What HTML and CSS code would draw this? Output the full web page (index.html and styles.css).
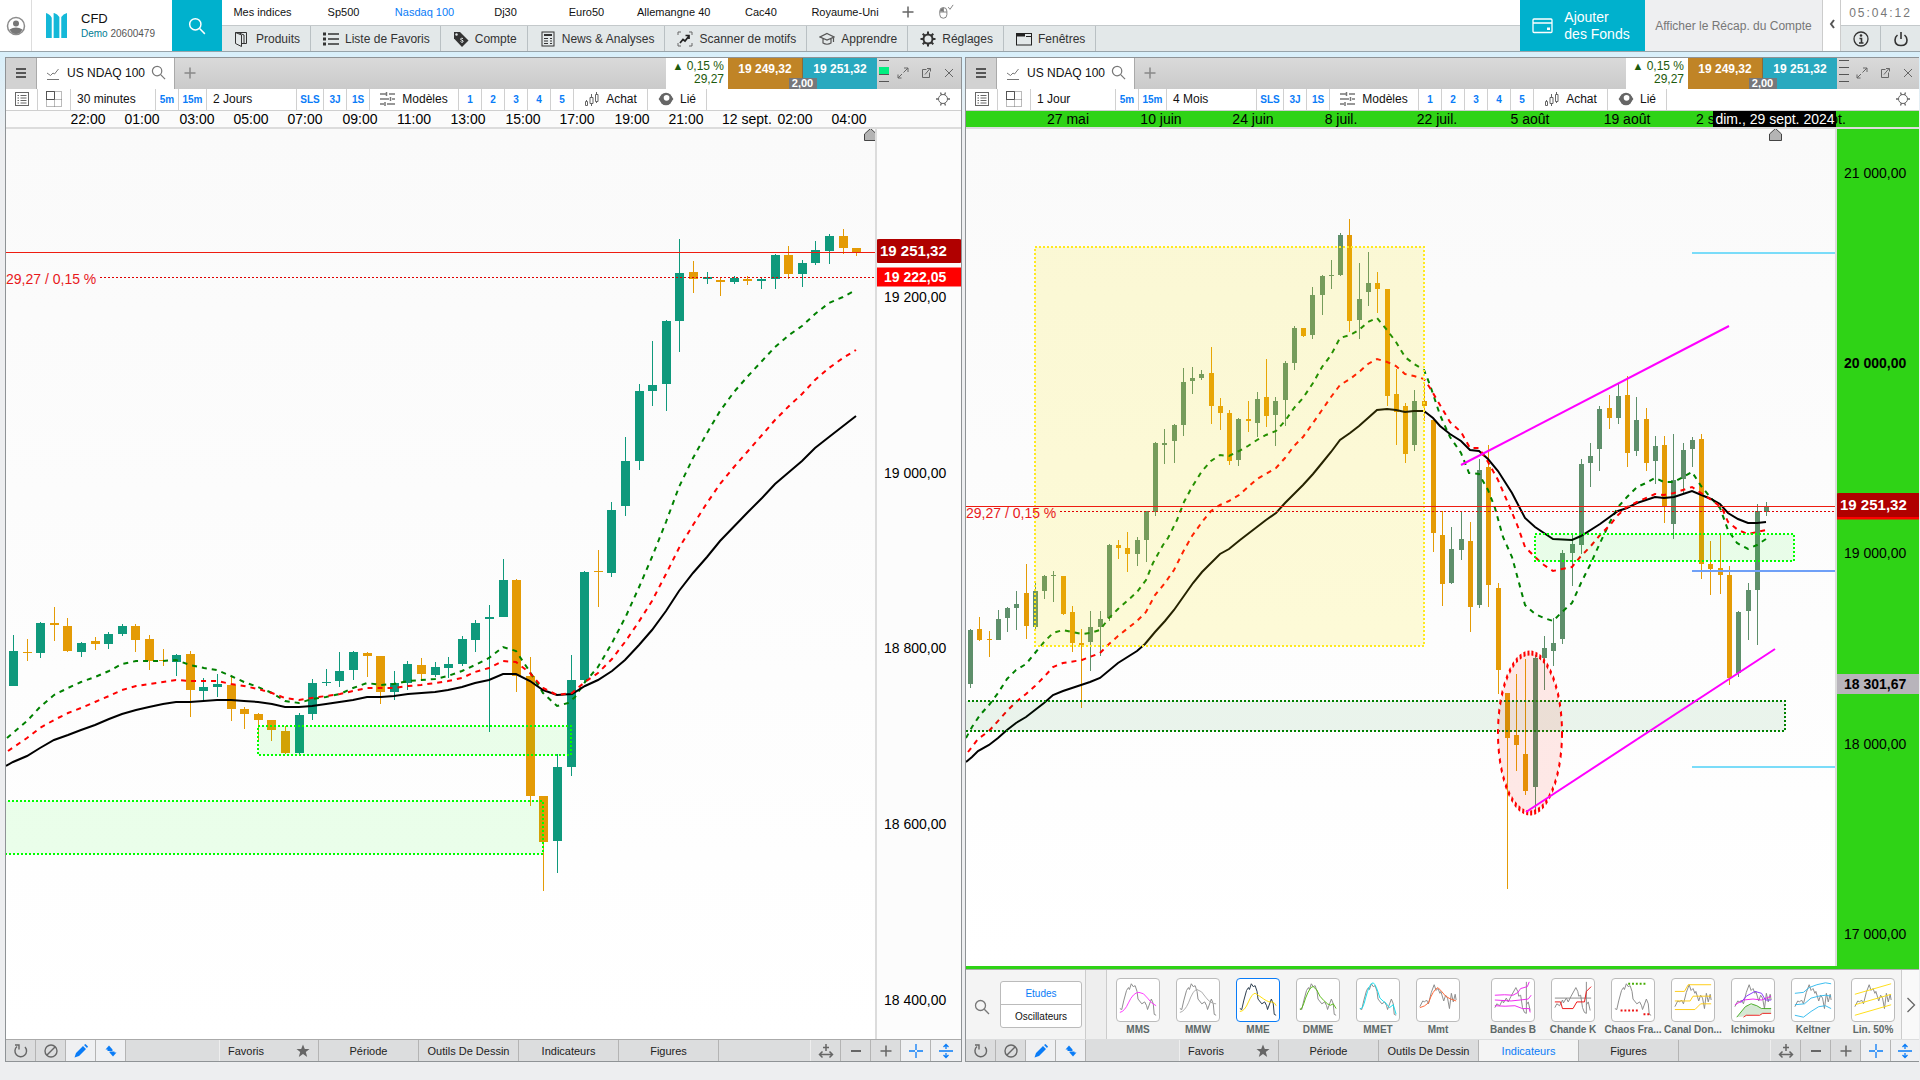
FILE: index.html
```html
<!DOCTYPE html>
<html lang="fr">
<head>
  <meta charset="UTF-8" />
  <meta name="viewport" content="width=device-width, initial-scale=1.0"/>
  <title>CFD - Nasdaq 100</title>
  <link rel="stylesheet" href="styles.css">
</head>
<body>

<!-- icon set -->
<svg class="sprite" width="0" height="0">
  <symbol id="i-user" viewBox="0 0 20 20"><circle cx="10" cy="10" r="8.5" fill="none" stroke="#8c8c8c" stroke-width="1.5"/><circle cx="10" cy="7.5" r="3" fill="#777"/><path d="M3.5 13.5Q10 9.5 16.500 13.500Q14 18 10 18Q6 18 3.500 13.500Z" fill="#777"/></symbol>
  <symbol id="i-search" viewBox="0 0 16 16"><circle cx="6.500" cy="6.500" r="5" fill="none" stroke="currentColor" stroke-width="1.300"/><path d="M10.300 10.300L15 15" stroke="currentColor" stroke-width="1.300"/></symbol>
  <symbol id="i-plus" viewBox="0 0 12 12"><path d="M6 0.500V11.500M0.500 6H11.500" stroke="currentColor" stroke-width="1.500"/></symbol>
  <symbol id="i-mouse" viewBox="0 0 18 18"><rect x="2" y="4" width="8" height="12" rx="4" fill="none" stroke="#777"/><path d="M2 9H10M6 4V9" stroke="#777"/><path d="M2.500 8.500V7Q3 4.500 6 4.500V8.500Z" fill="#777"/><path d="M11.500 3.500L13.500 6L17 1" fill="none" stroke="#777"/></symbol>
  <symbol id="i-book" viewBox="0 0 16 16"><path d="M1.500 1.500H12.500V12.500H8" fill="none" stroke="#333"/><path d="M1.500 1.500L7.500 4V15.500L1.500 12.500ZM4 1.500L10 4V13" fill="none" stroke="#333"/></symbol>
  <symbol id="i-list" viewBox="0 0 16 16"><path d="M5 3H16M5 8H16M5 13H16" stroke="#333" stroke-width="1.700"/><path d="M0 3H3M0 8H3M0 13H3" stroke="#333" stroke-width="3"/></symbol>
  <symbol id="i-tag" viewBox="0 0 16 16"><path d="M1 1H7L15.500 9.500L9 16L1 7.500Z" fill="#333"/><circle cx="3.500" cy="3.500" r="1.200" fill="#e3e8e9"/><path d="M10 7.500Q8 6.500 7.500 8Q7.500 9 9 9.200Q10.500 9.500 10 11Q9 12 7.500 10.500" fill="none" stroke="#e3e8e9"/></symbol>
  <symbol id="i-news" viewBox="0 0 16 16"><rect x="2" y="1" width="12" height="14" fill="none" stroke="#333"/><path d="M4 4H12" stroke="#333" stroke-width="2"/><path d="M4 7.500H8M4 10H8M4 12.500H8M10 7.500H12M10 10H12M10 12.500H12" stroke="#333"/></symbol>
  <symbol id="i-scan" viewBox="0 0 16 16"><path d="M1 4V1H4M12 1H15V4M15 12V15H12M4 15H1V12" fill="none" stroke="#666"/><path d="M3 12L6 8.500L8 10L12 5M12 8V4.500H8.500" fill="none" stroke="#222" stroke-width="1.700"/></symbol>
  <symbol id="i-learn" viewBox="0 0 16 16"><path d="M8 2.500L15 6L8 9L1 6ZM4 7.500V12Q8 14.500 12 12V7.500M14.500 6V11" fill="none" stroke="#555" stroke-width="1.200"/></symbol>
  <symbol id="i-gear" viewBox="0 0 16 16"><circle cx="8" cy="8" r="4.500" fill="none" stroke="currentColor" stroke-width="2"/><path d="M8 0.500V3.500M8 12.500V15.500M0.500 8H3.500M12.500 8H15.500M2.700 2.700L4.800 4.800M11.200 11.200L13.300 13.300M13.300 2.700L11.200 4.800M4.800 11.200L2.700 13.300" stroke="currentColor" stroke-width="2"/></symbol>
  <symbol id="i-windows" viewBox="0 0 16 16"><rect x="0.500" y="2.500" width="15" height="11.500" fill="none" stroke="#222"/><path d="M1 4H9" stroke="#222" stroke-width="3"/><path d="M10 5.500H15" stroke="#222"/></symbol>
  <symbol id="i-card" viewBox="0 0 22 16"><rect x="1" y="1" width="19" height="13.500" rx="1" fill="none" stroke="#fff" stroke-width="1.300"/><path d="M1 5H20" stroke="#fff" stroke-width="1.500"/><path d="M15 9.500H18V12H15Z" fill="#fff"/></symbol>
  <symbol id="i-left" viewBox="0 0 8 12"><path d="M6 2L3 6L6 10" fill="none" stroke="#555" stroke-width="2"/></symbol>
  <symbol id="i-info" viewBox="0 0 18 18"><circle cx="9" cy="9" r="7" fill="none" stroke="#333" stroke-width="1.300"/><circle cx="9" cy="5.500" r="1.300" fill="#333"/><path d="M7.500 8.500H9.500V13M7 13H11.500" fill="none" stroke="#333" stroke-width="1.600"/></symbol>
  <symbol id="i-power" viewBox="0 0 18 18"><path d="M9 2V9M5.500 5Q3 7 3 10Q3 15.500 9 15.500Q15 15.500 15 10Q15 7 12.500 5" fill="none" stroke="#333" stroke-width="1.600"/></symbol>
  <symbol id="i-menu" viewBox="0 0 12 12"><path d="M1 2H11M1 6H11M1 10H11" stroke="#555" stroke-width="2"/></symbol>
  <symbol id="i-line" viewBox="0 0 14 14"><path d="M1 7L4.500 9.500L7 7L8.500 8L12.500 3" fill="none" stroke="#777"/><path d="M1 13.500H13" stroke="#777"/></symbol>
  <symbol id="i-expand" viewBox="0 0 12 12"><path d="M6.500 5.500L11 1M7 1H11V5M5 7L1 11M1 7.500V11H4.500" fill="none" stroke="#666"/></symbol>
  <symbol id="i-popout" viewBox="0 0 12 12"><path d="M6.500 2.500H2.500V10.500H9.500V5.500M5 7.500L10 1.500M7 1.500H10.500V4.500" fill="none" stroke="#666"/></symbol>
  <symbol id="i-close" viewBox="0 0 12 12"><path d="M2 2L10 10M10 2L2 10" stroke="#666"/></symbol>
  <symbol id="i-sheet" viewBox="0 0 16 16"><rect x="1.500" y="1.500" width="13" height="13" fill="none" stroke="#666"/><path d="M3.500 4.500H5M6.500 4.500H12.500M3.500 7H5M6.500 7H12.500M3.500 9.500H5M6.500 9.500H12.500M3.500 12H5M6.500 12H12.500" stroke="#666"/></symbol>
  <symbol id="i-grid" viewBox="0 0 16 16"><rect x="0.500" y="0.500" width="8" height="8" fill="none" stroke="#555"/><path d="M8.500 0.500H15.500V15.500H0.500V8.500M8.500 8.500V15.500M8.500 8.500H15.500" fill="none" stroke="#777" stroke-dasharray="1 1"/></symbol>
  <symbol id="i-sliders" viewBox="0 0 16 16"><path d="M0 3H6M9 3H15M0 8H9M12 8H15M0 13H4M7 13H15" stroke="#777" stroke-width="1.500"/><path d="M6.500 1V5M10.500 6V10M5 11V15" stroke="#777" stroke-width="1.500"/></symbol>
  <symbol id="i-candles" viewBox="0 0 16 16"><path d="M2.500 9V13M7.500 3V15M12.500 1V12" stroke="#666"/><path d="M1.500 10.500H3.500V14.500H1.500ZM6 6.500H9V12.500H6ZM11.500 3.500H14V10.500H11.500Z" fill="#fff" stroke="#666"/></symbol>
  <symbol id="i-eye" viewBox="0 0 14 14"><circle cx="7" cy="7" r="5.500" fill="#666"/><circle cx="7.500" cy="6" r="2.500" fill="#fff"/><path d="M0.500 7Q2 4.500 3.500 4V10Q2 9.500 0.500 7ZM13.500 7Q12 4.500 10.500 4V10Q12 9.500 13.500 7Z" fill="#666"/></symbol>
  <symbol id="i-config" viewBox="0 0 16 16"><circle cx="8" cy="8" r="4.500" fill="none" stroke="#666"/><path d="M6.500 4L5.500 1.500M9.500 4L10.500 1.500M6.500 12L5.500 14.500M9.500 12L10.500 14.500M3.500 8H1M12.500 8H15" stroke="#666" stroke-width="1.300"/></symbol>
  <symbol id="i-refresh" viewBox="0 0 16 16"><path d="M4 3.500A5.800 5.800 0 1 0 12 4" fill="none" stroke="#666" stroke-width="1.400"/><path d="M2 2H6V6.500" fill="none" stroke="#666" stroke-width="1.400"/></symbol>
  <symbol id="i-ban" viewBox="0 0 16 16"><circle cx="8" cy="8" r="6" fill="none" stroke="#666" stroke-width="1.400"/><path d="M4 12L12 4" stroke="#666" stroke-width="1.400"/></symbol>
  <symbol id="i-pencil" viewBox="0 0 16 16"><path d="M1.500 14.500L3 10L10 3L13 6L6 13ZM11 2L12.500 1L15 3.500L14 5Z" fill="#0a7cf7"/></symbol>
  <symbol id="i-updown" viewBox="0 0 16 16"><path d="M2.500 6.500L6 2.500L9.500 6.500V8H4.500V6.500ZM6.500 9.500V8.500H11.500V9.500H13.500L10 13.500Z" fill="#0a7cf7"/></symbol>
  <symbol id="i-star" viewBox="0 0 14 14"><path d="M7 0.500L8.800 5H13.500L9.800 8L11.200 13L7 10L2.800 13L4.200 8L0.500 5H5.200Z" fill="#666"/></symbol>
  <symbol id="i-fit" viewBox="0 0 16 16"><path d="M8 1V8M5 4.500H11M2 11.500H14M4.500 8.500L1.500 11.500L4.500 14.500M11.500 8.500L14.500 11.500L11.500 14.500" fill="none" stroke="#666" stroke-width="1.500"/></symbol>
  <symbol id="i-minus" viewBox="0 0 12 12"><path d="M1 6H11" stroke="#666" stroke-width="2"/></symbol>
  <symbol id="i-cross" viewBox="0 0 16 16"><path d="M8 1V7M8 9V15M1 8H7M9 8H15" stroke="#0a7cf7" stroke-width="1.300"/></symbol>
  <symbol id="i-stretch" viewBox="0 0 16 16"><path d="M1 8H15M8 2V6M8 10V14M5.500 4L8 1.500L10.500 4M5.500 12L8 14.500L10.500 12" fill="none" stroke="#0a7cf7" stroke-width="1.300"/></symbol>
  <symbol id="i-next" viewBox="0 0 10 16"><path d="M1.500 1L8.500 8L1.500 15" fill="none" stroke="#666" stroke-width="1.300"/></symbol>

  <!-- price curves shared by the indicator thumbnails -->
  <symbol id="p-peak" viewBox="0 0 44 44"><path d="M3 31L5 32L7 23L10 12L12 9L13 11L15 5L17 8L19 7L21 13L22 21L26 26L29 24L31 28L32 32L36 21L38 26L39 37L41 38" fill="none" stroke="currentColor"/></symbol>
  <symbol id="p-late" viewBox="0 0 44 44"><path d="M3 30L5 26L8 28L11 22L12 25L15 20L17 24L20 18L25 9L27 13L28 18L30 17L32 30L34 35L36 36V3M36 27L38 24L40 33" fill="none" stroke="currentColor"/></symbol>
  <symbol id="p-mid" viewBox="0 0 44 44"><path d="M3 29L6 23L8 24L10 22L12 26L15 14L18 6L20 12L22 10L24 15L25 13L28 23L30 17L32 20L34 31L36 15L38 24L40 16L41 22" fill="none" stroke="currentColor"/></symbol>
</svg>

<header class="topbar">
  <button class="account" aria-label="Profil"><svg><use href="#i-user"/></svg></button>
  <div class="brand">
    <svg class="logo" viewBox="0 0 22 26"><path d="M0 0Q4 1 6 5V26H0ZM8 0H8.500Q12 1 14 4V26H8ZM16 4Q18 1 22 0V26H16Z" fill="#14b8d8"/></svg>
    <div>
      <div class="brand-name">CFD</div>
      <div class="brand-id"><span>Demo</span> 20600479</div>
    </div>
  </div>
  <button class="search" aria-label="Rechercher"><svg><use href="#i-search"/></svg></button>

  <div class="nav">
    <nav class="lists">
      <a href="#">Mes indices</a>
      <a href="#">Sp500</a>
      <a href="#" class="active">Nasdaq 100</a>
      <a href="#">Dj30</a>
      <a href="#">Euro50</a>
      <a href="#">Allemangne 40</a>
      <a href="#">Cac40</a>
      <a href="#">Royaume-Uni</a>
      <button class="tool" aria-label="Ajouter"><svg class="small"><use href="#i-plus"/></svg></button>
      <button class="tool" aria-label="Souris"><svg><use href="#i-mouse"/></svg></button>
    </nav>
    <nav class="menu">
      <button><svg><use href="#i-book"/></svg>Produits</button>
      <button><svg><use href="#i-list"/></svg>Liste de Favoris</button>
      <button><svg><use href="#i-tag"/></svg>Compte</button>
      <button><svg><use href="#i-news"/></svg>News &amp; Analyses</button>
      <button><svg><use href="#i-scan"/></svg>Scanner de motifs</button>
      <button><svg><use href="#i-learn"/></svg>Apprendre</button>
      <button><svg><use href="#i-gear"/></svg>Réglages</button>
      <button><svg><use href="#i-windows"/></svg>Fenêtres</button>
    </nav>
  </div>

  <button class="funds"><svg><use href="#i-card"/></svg><span>Ajouter<br>des Fonds</span></button>
  <button class="recap">Afficher le Récap. du Compte</button>
  <button class="fold" aria-label="Replier"><svg><use href="#i-left"/></svg></button>
  <div class="session">
    <div class="clock">05:04:12</div>
    <div class="session-buttons">
      <button aria-label="Info"><svg><use href="#i-info"/></svg></button>
      <button aria-label="Quitter"><svg><use href="#i-power"/></svg></button>
    </div>
  </div>
</header>

<main class="workspace">

  <!-- 30 minutes -->
  <section class="panel" id="intraday">
    <div class="titlebar">
      <button class="burger" aria-label="Menu"><svg><use href="#i-menu"/></svg></button>
      <div class="tab"><svg class="tab-line"><use href="#i-line"/></svg>US NDAQ 100<svg class="tab-search"><use href="#i-search"/></svg></div>
      <button class="new-tab" aria-label="Nouvel onglet"><svg><use href="#i-plus"/></svg></button>
      <div class="change"><span class="up">▲</span> 0,15 %<br>29,27</div>
      <div class="quotes">
        <button class="sell">19 249,32</button>
        <button class="buy">19 251,32</button>
        <span class="spread">2,00</span>
      </div>
      <div class="depth"><i></i><i class="on"></i><i></i><i></i></div>
      <div class="win-buttons">
        <button aria-label="Agrandir"><svg><use href="#i-expand"/></svg></button>
        <button aria-label="Détacher"><svg><use href="#i-popout"/></svg></button>
        <button aria-label="Fermer"><svg><use href="#i-close"/></svg></button>
      </div>
    </div>
    <div class="toolbar">
      <button class="w31" aria-label="Liste"><svg><use href="#i-sheet"/></svg></button>
      <button class="w33" aria-label="Disposition"><svg><use href="#i-grid"/></svg></button>
      <button class="period">30 minutes</button>
      <button class="quick w23">5m</button>
      <button class="quick w28">15m</button>
      <button class="range">2 Jours</button>
      <button class="quick w27">SLS</button>
      <button class="quick w23">3J</button>
      <button class="quick w23">1S</button>
      <button class="named w89"><svg><use href="#i-sliders"/></svg>Modèles</button>
      <button class="quick w23">1</button>
      <button class="quick w23">2</button>
      <button class="quick w23">3</button>
      <button class="quick w23">4</button>
      <button class="quick w23">5</button>
      <button class="named w74"><svg><use href="#i-candles"/></svg>Achat</button>
      <button class="named w59"><svg><use href="#i-eye"/></svg>Lié</button>
      <button class="config" aria-label="Configurer"><svg><use href="#i-config"/></svg></button>
    </div>
    <svg class="time-axis"></svg>
    <div class="chart">
      <div class="plot"><svg viewBox="6 129 869 910" preserveAspectRatio="none"></svg><span class="delta">29,27 / 0,15 %</span></div>
      <svg class="price-axis"></svg>
    </div>
    <div class="bottombar">
      <button class="icon" aria-label="Actualiser"><svg><use href="#i-refresh"/></svg></button>
      <button class="icon" aria-label="Effacer"><svg><use href="#i-ban"/></svg></button>
      <button class="icon on" aria-label="Dessiner"><svg><use href="#i-pencil"/></svg></button>
      <button class="icon on" aria-label="Inverser"><svg><use href="#i-updown"/></svg></button>
      <span class="gap"></span>
      <button class="cat fav">Favoris<svg><use href="#i-star"/></svg></button>
      <button class="cat">Période</button>
      <button class="cat">Outils De Dessin</button>
      <button class="cat">Indicateurs</button>
      <button class="cat">Figures</button>
      <span class="fill"></span>
      <button class="icon" aria-label="Ajuster"><svg><use href="#i-fit"/></svg></button>
      <button class="icon" aria-label="Zoom arrière"><svg class="small"><use href="#i-minus"/></svg></button>
      <button class="icon" aria-label="Zoom avant"><svg class="small"><use href="#i-plus"/></svg></button>
      <button class="icon on" aria-label="Réticule"><svg><use href="#i-cross"/></svg></button>
      <button class="icon on" aria-label="Étirer"><svg><use href="#i-stretch"/></svg></button>
    </div>
  </section>

  <!-- 1 jour -->
  <section class="panel daily" id="daily">
    <div class="titlebar">
      <button class="burger" aria-label="Menu"><svg><use href="#i-menu"/></svg></button>
      <div class="tab"><svg class="tab-line"><use href="#i-line"/></svg>US NDAQ 100<svg class="tab-search"><use href="#i-search"/></svg></div>
      <button class="new-tab" aria-label="Nouvel onglet"><svg><use href="#i-plus"/></svg></button>
      <div class="change"><span class="up">▲</span> 0,15 %<br>29,27</div>
      <div class="quotes">
        <button class="sell">19 249,32</button>
        <button class="buy">19 251,32</button>
        <span class="spread">2,00</span>
      </div>
      <div class="depth"><i></i><i></i><i></i><i></i></div>
      <div class="win-buttons">
        <button aria-label="Agrandir"><svg><use href="#i-expand"/></svg></button>
        <button aria-label="Détacher"><svg><use href="#i-popout"/></svg></button>
        <button aria-label="Fermer"><svg><use href="#i-close"/></svg></button>
      </div>
    </div>
    <div class="toolbar">
      <button class="w31" aria-label="Liste"><svg><use href="#i-sheet"/></svg></button>
      <button class="w33" aria-label="Disposition"><svg><use href="#i-grid"/></svg></button>
      <button class="period">1 Jour</button>
      <button class="quick w23">5m</button>
      <button class="quick w28">15m</button>
      <button class="range">4 Mois</button>
      <button class="quick w27">SLS</button>
      <button class="quick w23">3J</button>
      <button class="quick w23">1S</button>
      <button class="named w89"><svg><use href="#i-sliders"/></svg>Modèles</button>
      <button class="quick w23">1</button>
      <button class="quick w23">2</button>
      <button class="quick w23">3</button>
      <button class="quick w23">4</button>
      <button class="quick w23">5</button>
      <button class="named w74"><svg><use href="#i-candles"/></svg>Achat</button>
      <button class="named w59"><svg><use href="#i-eye"/></svg>Lié</button>
      <button class="config" aria-label="Configurer"><svg><use href="#i-config"/></svg></button>
    </div>
    <svg class="time-axis"></svg>
    <div class="chart">
      <div class="plot"><svg viewBox="966 129 869 837" preserveAspectRatio="none"></svg><span class="delta">29,27 / 0,15 %</span></div>
      <svg class="price-axis"></svg>
    </div>

    <div class="studies">
      <button class="find" aria-label="Rechercher"><svg><use href="#i-search"/></svg></button>
      <div class="kind">
        <button class="active">Etudes</button>
        <button>Oscillateurs</button>
      </div>
      <span class="strip"></span>
      <div class="study-list">
        <button class="study"><svg viewBox="0 0 44 44"><use href="#p-peak"/><path d="M3 35Q8 34 12 25Q17 14 23 14Q28 14 32 20Q36 26 41 28" stroke="#f3f"/></svg>MMS</button>
        <button class="study"><svg viewBox="0 0 44 44"><use href="#p-peak"/><path d="M3 35Q8 34 12 25Q17 11 21 11Q26 12 30 19Q35 26 41 26" stroke="#aaa"/></svg>MMW</button>
        <button class="study active"><svg viewBox="0 0 44 44"><use href="#p-peak"/><path d="M3 34Q8 34 12 24Q16 15 19 15Q24 18 28 21Q34 25 37 24Q40 25 41 28" stroke="#fd0"/></svg>MME</button>
        <button class="study"><svg viewBox="0 0 44 44"><use href="#p-peak"/><path d="M3 32Q5 33 9 20Q14 7 17 8Q21 10 24 18Q28 23 32 26Q35 29 38 26L41 31" stroke="#5b1"/></svg>DMME</button>
        <button class="study"><svg viewBox="0 0 44 44"><use href="#p-peak"/><path d="M3 31Q6 33 9 20Q13 4 17 4Q20 6 24 20Q28 24 30 25L34 30L38 27L41 37" stroke="#1de"/></svg>MMET</button>
        <button class="study"><svg viewBox="0 0 44 44"><use href="#p-mid"/><path d="M3 30Q8 29 12 25Q17 11 22 9Q26 13 30 18Q34 21 41 23" stroke="#f63"/></svg>Mmt</button>
        <span class="rule"></span>
        <button class="study"><svg viewBox="0 0 44 44"><use href="#p-late"/><path d="M3 17Q14 16 22 17Q28 15 30 10L37 8L39 3M3 22L20 23Q30 22 38 21L41 17M3 28Q14 29 24 28L32 31L39 31L40 35" stroke="#e2e"/></svg>Bandes B</button>
        <button class="study"><svg viewBox="0 0 44 44"><use href="#p-late"/><path d="M3 20H41" stroke="#888"/><path d="M3 24H9L11 31H22L26 24H34L36 13L41 8" stroke="#e11"/></svg>Chande K</button>
        <button class="study"><svg viewBox="0 0 44 44"><use href="#p-peak"/><path d="M17 5H37" stroke="#4a0" stroke-width="2" stroke-dasharray="2 2"/><path d="M9 33H29M33 37H41" stroke="#e11" stroke-width="2" stroke-dasharray="2 2"/></svg>Chaos Fra...</button>
        <button class="study"><svg viewBox="0 0 44 44"><use href="#p-mid"/><path d="M3 13H13L17 6H41M3 23H19L22 18H41M3 32H24L30 26H41" stroke="#fc1"/></svg>Canal Don...</button>
        <button class="study"><svg viewBox="0 0 44 44"><path d="M5 40L15 28L24 27L32 32L41 30V36L14 39Z" fill="#d5e8d4" stroke="none"/><use href="#p-mid"/><path d="M3 27L12 22L22 21L31 22L41 18" stroke="#e2e"/><path d="M9 25L15 18L24 13L31 15L35 22H41" stroke="#83f"/><path d="M5 40L14 29L20 26L26 28L31 31L41 31" stroke="#4a2"/><path d="M12 40L15 38H29L32 36H41" stroke="#e22"/></svg>Ichimoku</button>
        <button class="study"><svg viewBox="0 0 44 44"><use href="#p-mid"/><path d="M3 15L12 14L18 9L26 6L35 4L41 5M3 27L13 26L20 20L28 18L35 17L41 18M3 38L12 40L20 34L28 29L35 28L41 31" stroke="#3be"/></svg>Keltner</button>
        <button class="study"><svg viewBox="0 0 44 44"><use href="#p-mid"/><path d="M3 16L41 5M3 27L41 16M3 38L41 27" stroke="#fd1"/></svg>Lin. 50%</button>
      </div>
      <button class="next" aria-label="Suivant"><svg><use href="#i-next"/></svg></button>
    </div>

    <div class="bottombar">
      <button class="icon" aria-label="Actualiser"><svg><use href="#i-refresh"/></svg></button>
      <button class="icon" aria-label="Effacer"><svg><use href="#i-ban"/></svg></button>
      <button class="icon on" aria-label="Dessiner"><svg><use href="#i-pencil"/></svg></button>
      <button class="icon on" aria-label="Inverser"><svg><use href="#i-updown"/></svg></button>
      <span class="gap"></span>
      <button class="cat fav">Favoris<svg><use href="#i-star"/></svg></button>
      <button class="cat">Période</button>
      <button class="cat">Outils De Dessin</button>
      <button class="cat active">Indicateurs</button>
      <button class="cat">Figures</button>
      <span class="fill"></span>
      <button class="icon" aria-label="Ajuster"><svg><use href="#i-fit"/></svg></button>
      <button class="icon" aria-label="Zoom arrière"><svg class="small"><use href="#i-minus"/></svg></button>
      <button class="icon" aria-label="Zoom avant"><svg class="small"><use href="#i-plus"/></svg></button>
      <button class="icon on" aria-label="Réticule"><svg><use href="#i-cross"/></svg></button>
      <button class="icon on" aria-label="Étirer"><svg><use href="#i-stretch"/></svg></button>
    </div>
  </section>

</main>

<script src="script.js"></script>
</body>
</html>
```
FILE: styles.css
```css
* {
  box-sizing: border-box;
}
body {
  margin: 0;
  height: 100vh;
  display: flex;
  flex-direction: column;
  font-family: "Liberation Sans", Arial, sans-serif;
  font-size: 12px;
  color: #111;
  background: linear-gradient(#d8effa, #d8effa 52px, #edeef0 140px);
}
button {
  font: inherit;
  color: inherit;
  background: none;
  border: none;
  padding: 0;
  margin: 0;
  display: flex;
  align-items: center;
  justify-content: center;
  white-space: nowrap;
  cursor: pointer;
}
a {
  color: inherit;
  text-decoration: none;
}
svg {
  width: 16px;
  height: 16px;
  flex: none;
  display: block;
}
svg.small {
  width: 12px;
  height: 12px;
}
.sprite {
  position: absolute;
  width: 0;
  height: 0;
}

/* top bar */
.topbar {
  display: flex;
  height: 52px;
  background: #fff;
  border-bottom: 1px solid #98a4aa;
}
.account {
  width: 32px;
  border-right: 1px solid #ddd;
}
.account svg {
  width: 20px;
  height: 20px;
}
.brand {
  width: 140px;
  display: flex;
  align-items: center;
  gap: 14px;
  padding-left: 14px;
}
.logo {
  width: 21px;
  height: 25px;
}
.brand-name {
  font-size: 13px;
  line-height: 17px;
}
.brand-id {
  font-size: 10px;
  line-height: 14px;
  color: #555;
}
.brand-id span {
  color: #007c94;
}
.search {
  width: 50px;
  background: #00b1cd;
  color: #fff;
}
.search svg {
  width: 18px;
  height: 18px;
}
.nav {
  flex: 1;
  min-width: 0;
}
.lists {
  display: flex;
  align-items: center;
  height: 26px;
  padding-bottom: 2px;
  font-size: 11px;
  border-bottom: 1px solid #c4c9cb;
}
.lists a {
  min-width: 81px;
  padding: 0 10px;
  text-align: center;
  white-space: nowrap;
}
.lists a.active {
  color: #0a7cf7;
}
.tool {
  width: 38px;
  color: #666;
}
.menu {
  display: flex;
  height: 25px;
  background: #e3e8e9;
}
.menu button {
  gap: 6px;
  padding: 0 10px 0 12px;
  color: #333;
  border-right: 1px solid #b9c0c3;
}
.funds {
  width: 125px;
  gap: 10px;
  padding-right: 3px;
  background: #00b1cd;
  color: #fff;
  font-size: 14px;
  line-height: 17px;
  text-align: left;
}
.funds svg {
  width: 22px;
}
.recap {
  width: 177px;
  background: #eeeff1;
  color: #777;
}
.fold {
  width: 19px;
  border-left: 1px solid #ccc;
  border-right: 1px solid #ccc;
}
.fold svg {
  width: 8px;
  height: 12px;
  margin-bottom: 4px;
}
.session {
  width: 79px;
}
.clock {
  height: 26px;
  line-height: 26px;
  text-align: center;
  letter-spacing: 2px;
  color: #777;
  border-bottom: 1px solid #c4c9cb;
}
.session-buttons {
  display: flex;
  height: 25px;
  background: #e3e8e9;
}
.session-buttons button {
  flex: 1;
}
.session-buttons button + button {
  border-left: 1px solid #b9c0c3;
}
.session-buttons svg {
  width: 18px;
  height: 18px;
}

/* chart windows */
.workspace {
  flex: 1;
  min-height: 0;
  display: grid;
  grid-template-columns: 957fr 954fr;
  gap: 3px;
  padding: 5px 1px 18px 5px;
}
.panel {
  display: flex;
  flex-direction: column;
  min-width: 0;
  min-height: 0;
  background: #fff;
  border: 1px solid #8f9396;
}
.daily {
  border-right: none;
}
.titlebar {
  display: flex;
  height: 31px;
  background: linear-gradient(#dadada, #cacaca);
}
.burger {
  width: 31px;
  background: #d2d2d2;
  border-right: 1px solid #aaa;
}
.burger svg,
.new-tab svg {
  width: 12px;
  height: 12px;
}
.tab {
  display: flex;
  align-items: center;
  width: 138px;
  padding: 0 0 2px 9px;
  white-space: nowrap;
  background: #fff;
  border-right: 1px solid #aaa;
}
.tab-line {
  width: 14px;
  height: 14px;
  margin-right: 7px;
}
.tab-search {
  width: 15px;
  height: 15px;
  margin-left: 6px;
  color: #777;
}
.new-tab {
  width: 31px;
  padding-right: 2px;
  color: #888;
}
.burger,
.new-tab,
.win-buttons {
  padding-bottom: 2px;
}
.change {
  width: 62px;
  margin-left: auto;
  padding: 2px 4px 0 0;
  text-align: right;
  line-height: 13px;
  color: #1d5a0c;
  background: #fff;
}
.up {
  font-size: 11px;
}
.quotes {
  position: relative;
  display: flex;
  width: 149px;
  color: #fff;
  font-weight: bold;
}
.quotes button {
  flex: 1;
  padding-bottom: 10px;
}
.sell {
  background: #c08426;
  border-right: 1px solid #8a6a38;
}
.buy {
  background: #29a9bf;
}
.spread {
  position: absolute;
  left: 50%;
  bottom: 0;
  margin-left: -14px;
  width: 28px;
  font-size: 11px;
  line-height: 11px;
  text-align: center;
  background: #76777b;
}
.depth {
  width: 14px;
  padding: 2px 2px 0;
  display: flex;
  flex-direction: column;
  gap: 6px;
}
.depth i {
  height: 1px;
  background: #555;
}
.depth i.on {
  height: 7px;
  margin-bottom: -6px;
  background: #00ee80;
}
.win-buttons {
  display: flex;
  width: 70px;
}
.daily .win-buttons {
  width: 68px;
}
.win-buttons button {
  flex: 1;
}
.win-buttons svg {
  width: 12px;
  height: 12px;
}

.toolbar {
  display: flex;
  height: 22px;
  background: #fff;
  border-bottom: 1px solid #cfcfcf;
}
.toolbar button {
  padding-bottom: 1px;
  border-right: 1px solid #d0d0d0;
}
.toolbar .period,
.toolbar .range {
  justify-content: flex-start;
  padding-left: 6px;
}
.toolbar .period {
  width: 85px;
}
.toolbar .range {
  width: 90px;
}
.toolbar .quick {
  padding-bottom: 0;
  font-size: 10px;
  font-weight: bold;
  color: #0a7cf7;
}
.toolbar .named {
  gap: 6px;
}
.toolbar .config {
  width: 36px;
  margin-left: auto;
  border: none;
}
.daily .config {
  width: 32px;
}
.w23 { width: 23px; }
.w27 { width: 27px; }
.w28 { width: 28px; }
.w31 { width: 32px; }
.w33 { width: 33px; }
.w59 { width: 59px; }
.w74 { width: 74px; }
.w89 { width: 89px; }

/* chart */
.time-axis {
  width: 100%;
  height: 18px;
  font-size: 14px;
  background: #fbfbfb;
  border-bottom: 2px solid #dcdcdc;
  overflow: hidden;
}
.chart {
  flex: 1;
  min-height: 0;
  display: flex;
  overflow: hidden;
}
.plot {
  position: relative;
  flex: 1;
  min-width: 0;
  background: linear-gradient(#fafafa, #fff);
}
.plot svg {
  width: 100%;
  height: 100%;
}
.delta {
  position: absolute;
  left: 0;
  font-size: 14px;
  line-height: 16px;
  color: #e8181c;
}
.price-axis {
  width: 86px;
  height: 100%;
  font-size: 14px;
  background: #fcfcfc;
  border-left: 2px solid #dcdcdc;
}
.daily .chart {
  border-bottom: 3px solid #2fd316;
}
.daily .time-axis,
.daily .price-axis {
  background: #2fd316;
}
.daily .price-axis {
  width: 84px;
}
.bold {
  font-weight: bold;
}
.last {
  font-size: 15px;
  font-weight: bold;
}

/* indicators */
.studies {
  display: flex;
  height: 70px;
  background: #f4f4f4;
  border-top: 1px solid #aaa;
}
.find {
  width: 31px;
  padding-top: 4px;
  color: #777;
}
.kind {
  width: 82px;
  height: 47px;
  margin: 11px 3px 0;
  font-size: 10px;
  background: #fff;
  border: 1px solid #bbb;
  border-radius: 3px;
}
.kind button {
  width: 100%;
  height: 22px;
}
.kind .active {
  height: 23px;
  color: #0a7cf7;
  border-bottom: 1px solid #bbb;
}
.strip {
  width: 22px;
  background: #eee;
  border-left: 1px solid #ccc;
  border-right: 1px solid #ccc;
}
.study-list {
  flex: 1;
  min-width: 0;
  display: flex;
  padding: 8px 0 0 1px;
  overflow: hidden;
}
.study {
  width: 60px;
  flex: none;
  flex-direction: column;
  justify-content: flex-start;
  gap: 2px;
  font-size: 10px;
  font-weight: bold;
  color: #5d6868;
}
.study svg {
  width: 44px;
  height: 44px;
  color: #888;
  fill: none;
  background: #fff;
  border: 1px solid #bbb;
  border-radius: 4px;
}
.study.active svg {
  color: #234;
  border-color: #0a7cf7;
}
.rule {
  width: 1px;
  height: 40px;
  margin: 7px 10px 0 5px;
  background: #ccc;
}
.next {
  width: 18px;
  background: #f9f9f9;
  border-left: 1px solid #ccc;
}
.next svg {
  width: 10px;
}

/* bottom bar */
.bottombar {
  display: flex;
  height: 22px;
  font-size: 11px;
  color: #222;
  background: #dcddde;
  border-top: 1px solid #aaa;
}
.daily .bottombar {
  border-top-color: #dcddde;
}
.icon {
  width: 30px;
  color: #666;
  border-right: 1px solid #b4b4b4;
}
.icon:last-child {
  border-right: none;
}
.daily .icon:last-child {
  width: 28px;
}
.icon.on {
  background: #eff0f2;
}
.gap {
  width: 93px;
}
.cat {
  width: 100px;
  border-right: 1px solid #b4b4b4;
}
.cat.active {
  color: #0a7cf7;
  background: #f4f4f4;
}
.fav {
  justify-content: space-between;
  padding: 0 8px;
  border-left: 1px solid #eee;
}
.fav svg {
  width: 14px;
  height: 14px;
}
.fill {
  flex: 1;
  border-right: 1px solid #eee;
}
```
FILE: script.js
```js
const NS = 'http://www.w3.org/2000/svg';

// candles: [high, body top, body bottom, low, direction]
const intraday = {
  box: [6, 129, 869, 910],
  x0: 13.5, step: 13.6, body: 9, wick: 1, up: '#0f997c', down: '#e49b06',
  candles: [
    [635,651,686,686,1],[639,652,653,661,0],[622,623,653,658,1],[607,623,625,641,0],[618,626,651,652,0],
    [642,643,652,657,1],[637,641,644,650,0],[632,634,644,649,1],[624,626,634,636,1],[624,626,640,652,0],
    [635,639,661,670,0],[649,660,661,666,0],[654,655,662,676,1],[651,654,690,717,0],[678,687,691,700,1],
    [674,684,687,697,1],[677,685,709,721,0],[707,709,714,729,0],[713,714,720,741,0],[720,720,730,741,0],
    [726,731,753,754,0],[713,715,753,754,1],[679,683,714,720,1],[669,682,683,686,1],[652,671,681,687,1],
    [651,652,670,680,1],[652,653,656,677,0],[656,656,692,704,0],[671,683,692,700,1],[661,664,683,690,1],
    [658,665,674,680,0],[662,667,675,677,1],[657,664,668,678,1],[636,639,664,666,1],[620,623,640,652,1],
    [605,617,619,732,1],[559,580,617,617,1],[579,580,676,692,0],[657,676,796,806,0],[796,796,842,891,0],
    [754,767,841,873,1],[655,680,767,776,1],[571,572,680,683,1],[550,571,572,607,0],[502,510,573,577,1],
    [437,461,506,516,1],[384,391,461,470,1],[341,385,391,406,1],[320,321,384,411,1],[239,273,321,352,1],
    [261,272,279,293,0],[272,277,279,284,1],[278,280,282,296,0],[276,278,282,284,1],[276,279,281,285,0],
    [278,279,281,289,1],[254,255,279,289,1],[246,255,274,279,0],[260,263,274,287,1],[241,250,263,265,1],
    [234,236,251,264,1],[229,236,248,254,0],[248,248,253,256,0]
  ],
  slow: '6,766 13,762 27,756 40,748 54,740 68,735 81,730 95,725 109,719 122,714 136,710 149,707 163,704 176,702 190,702 217,700 231,700 244,701 258,702 272,704 285,707 299,707 312,706 326,704 353,700 367,697 381,697 394,696 408,694 435,692 448,690 462,687 475,683 489,680 503,674 516,674 530,681 543,690 557,695 572,694 585,686 598,680 612,671 625,660 639,645 652,630 666,611 679,591 693,573 707,557 720,541 748,512 762,498 775,484 802,461 815,448 829,437 856,416',
  medium: '8,751 27,738 40,728 54,720 68,713 81,708 95,702 109,696 122,690 136,686 149,684 163,682 176,680 190,681 217,681 231,684 244,686 258,689 272,693 285,698 299,700 312,698 326,696 340,694 353,691 367,688 394,688 408,686 421,685 435,683 448,681 462,678 475,672 489,668 503,661 516,662 530,673 543,688 557,695 572,693 585,682 598,673 612,659 625,642 638,623 652,601 666,574 679,548 693,525 707,503 720,484 734,467 748,451 762,435 775,420 789,406 802,394 815,380 829,368 843,358 856,350',
  fast: '7,738 27,721 40,707 54,695 68,688 81,682 95,677 109,671 122,664 136,661 163,661 176,660 190,665 204,668 217,670 231,676 244,682 258,687 272,693 285,701 299,703 312,699 326,697 340,694 353,688 367,683 381,685 394,684 408,681 435,679 448,676 462,671 475,665 489,658 503,647 516,651 530,672 543,693 557,706 568,703 575,697 585,682 598,667 612,643 626,616 640,585 652,557 666,522 679,487 693,458 707,433 720,411 734,392 748,376 762,361 775,347 789,335 802,326 815,314 829,303 843,297 856,290',
  zones: [
    { x: 258, y: 726, w: 313, h: 29, color: '#00ff00', fill: 'rgba(0,255,0,.08)' },
    { x: 0, y: 801, w: 543, h: 53, color: '#00ff00', fill: 'rgba(0,255,0,.08)' }
  ],
  lines: [],
  last: 252.5, prev: 277.5, prevFrom: 100, marker: 870.5,
  times: [['22:00',88],['01:00',142],['03:00',197],['05:00',251],['07:00',305],['09:00',360],['11:00',414],['13:00',468],['15:00',523],['17:00',577],['19:00',632],['21:00',686],['12 sept.',747],['02:00',795],['04:00',849]],
  prices: [['19 200,00',297],['19 000,00',473],['18 800,00',648],['18 600,00',824],['18 400,00',1000]],
  tags: [
    { text: '19 251,32', y: 251, h: 24, fill: '#b00000', color: '#fff', cls: 'last', x: 3, r: 3 },
    { text: '19 222,05', y: 277, h: 19, fill: '#ff0000', color: '#fff', cls: 'bold', x: 7, r: 0 }
  ]
};

const daily = {
  box: [966, 129, 869, 837],
  x0: 970.5, step: 9.256, body: 5, wick: 1, up: '#5e8f6b', down: '#e49b06',
  candles: [
    [629,630,684,688,1],[617,629,640,641,0],[631,639,640,657,0],[610,619,640,640,1],[607,608,618,632,1],
    [591,604,608,630,1],[564,593,626,639,0],[583,591,627,629,1],[575,576,591,599,1],[571,575,576,602,1],
    [576,576,614,615,0],[606,612,643,652,0],[629,643,645,708,0],[611,627,642,671,1],[611,619,627,656,1],
    [544,545,618,621,1],[540,545,548,559,0],[532,548,554,572,0],[537,540,554,566,1],[511,511,540,562,1],
    [442,443,512,516,1],[429,443,445,464,1],[424,425,441,463,1],[368,382,425,436,1],[367,378,381,394,1],
    [370,374,378,380,1],[347,373,406,424,0],[398,406,413,430,0],[410,413,461,465,0],[418,419,460,466,1],
    [401,419,421,432,0],[392,399,423,437,1],[359,397,416,427,0],[397,401,415,446,1],[361,363,400,426,1],
    [326,328,363,370,1],[328,328,336,337,0],[287,295,335,339,1],[275,276,295,315,1],[260,275,276,289,1],
    [233,235,275,276,1],[219,235,321,332,0],[263,299,320,339,1],[252,283,292,306,1],[272,283,289,313,0],
    [289,289,396,406,0],[369,394,412,445,0],[403,406,454,463,0],[390,401,445,451,1],[383,401,406,421,0],
    [420,420,533,552,0],[511,535,584,606,0],[527,549,583,584,1],[511,539,550,560,1],[522,541,607,632,0],
    [459,470,605,608,1],[445,467,585,607,0],[583,588,670,694,0],[693,693,738,889,0],[674,735,745,771,0],
    [659,754,791,795,0],[655,658,787,810,1],[636,648,658,690,1],[618,643,651,666,1],[550,553,639,644,1],
    [535,544,553,586,1],[459,464,545,554,1],[443,456,463,487,1],[406,409,449,471,1],[395,408,418,429,0],
    [383,396,418,424,1],[376,395,453,467,0],[397,420,451,456,1],[408,419,463,471,0],[436,446,461,484,1],
    [436,445,506,523,0],[434,480,524,539,1],[443,450,479,494,1],[437,440,449,467,1],[434,439,564,579,0],
    [541,564,569,595,0],[535,568,575,594,0],[566,575,678,685,0],[611,612,673,677,1],[583,590,611,640,1],
    [504,511,590,645,1],[502,507,512,516,1]
  ],
  slow: '966,762 972,757 978,751 989,745 998,738 1007,730 1016,723 1026,717 1044,703 1053,695 1063,691 1072,688 1090,682 1100,678 1118,663 1137,651 1145,644 1155,632 1165,621 1174,610 1193,583 1202,572 1220,554 1229,549 1240,540 1266,520 1276,513 1285,503 1294,494 1303,485 1313,474 1322,463 1331,452 1340,440 1350,433 1359,426 1368,418 1377,410 1387,409 1396,410 1405,412 1414,411 1424,411 1433,418 1440,426 1450,434 1461,441 1470,450 1479,451 1488,459 1498,471 1512,493 1525,518 1535,527 1553,539 1572,540 1581,536 1600,524 1618,511 1627,508 1637,503 1655,497 1664,498 1674,497 1683,494 1692,491 1711,499 1720,504 1728,513 1738,519 1748,523 1757,523 1766,522',
  medium: '968,752 978,739 989,731 1007,711 1016,702 1026,694 1035,686 1044,677 1053,667 1063,663 1082,660 1100,653 1109,644 1118,636 1137,621 1146,612 1155,595 1165,583 1174,570 1183,552 1192,536 1202,522 1211,511 1220,505 1229,501 1239,495 1248,487 1257,479 1276,468 1285,458 1294,446 1303,437 1313,423 1322,410 1331,397 1340,385 1350,379 1359,372 1368,364 1377,359 1387,362 1396,366 1405,374 1414,376 1424,379 1430,388 1440,405 1450,422 1461,432 1470,448 1479,448 1488,462 1498,480 1508,503 1518,527 1525,547 1535,557 1544,565 1553,571 1562,569 1572,567 1581,556 1590,547 1600,535 1610,525 1618,515 1627,507 1637,502 1655,494 1664,495 1674,493 1692,487 1701,493 1713,501 1722,508 1728,522 1738,530 1748,534 1766,530',
  fast: '966,738 972,727 980,715 989,705 998,693 1007,679 1016,670 1026,664 1035,653 1044,642 1053,633 1063,630 1072,632 1082,634 1090,633 1100,630 1109,618 1118,609 1127,601 1137,592 1146,580 1153,563 1163,545 1168,538 1177,520 1184,502 1192,487 1202,471 1211,461 1220,455 1229,456 1239,451 1248,446 1257,440 1266,435 1276,431 1285,421 1294,408 1303,398 1313,383 1322,367 1331,355 1340,338 1350,335 1359,330 1368,322 1377,318 1387,330 1396,342 1405,357 1414,364 1424,370 1430,385 1440,415 1450,437 1461,453 1469,473 1479,474 1488,490 1495,508 1503,537 1512,557 1525,605 1535,614 1544,618 1553,621 1562,612 1572,603 1581,583 1590,565 1600,543 1610,522 1618,507 1627,497 1637,487 1646,483 1655,478 1664,482 1674,482 1683,477 1692,472 1701,486 1711,498 1720,508 1728,530 1737,543 1748,549 1757,545 1766,539',
  zones: [
    { x: 1035, y: 247, w: 389, h: 399, color: '#ffe91f', fill: 'rgba(255,235,0,.15)' },
    { x: 960, y: 701, w: 825, h: 30, color: '#008000', fill: 'rgba(0,128,30,.08)' },
    { x: 1535, y: 534, w: 259, h: 27, color: '#00ff00', fill: 'rgba(0,255,0,.08)' }
  ],
  lines: [
    [1461, 465, 1729, 326, '#ff00ff'],
    [1526, 812, 1775, 649, '#ff00ff'],
    [1692, 253, 1836, 253, '#7adcf9'],
    [1692, 571, 1836, 571, '#6fa0f7'],
    [1692, 767, 1836, 767, '#7adcf9']
  ],
  ellipse: { cx: 1530, cy: 733, r: 32, ratio: 2.5 },
  last: 506.5, prev: 511.5, prevFrom: 1060, marker: 1775.5,
  times: [['27 mai',1068],['10 juin',1161],['24 juin',1253],['8 juil.',1341],['22 juil.',1437],['5 août',1530],['19 août',1627],['2 sept.',1717],['16 sept.',1821]],
  cursor: ['dim., 29 sept. 2024', 1775],
  prices: [['21 000,00',173],['20 000,00',363,'bold'],['19 000,00',553],['18 000,00',744],['17 000,00',934]],
  tags: [
    { text: '', y: 512, h: 15, fill: '#ff0000', x: 6, r: 0 },
    { text: '19 251,32', y: 505, h: 24, fill: '#b00000', color: '#fff', cls: 'last', x: 3, r: 3 },
    { text: '18 301,67', y: 684, h: 20, fill: '#b8b4bb', color: '#000', cls: 'bold', x: 7, r: 0 }
  ]
};

function add(parent, name, attrs, text) {
  const el = document.createElementNS(NS, name);
  for (const key in attrs) el.setAttribute(key, attrs[key]);
  if (text) el.textContent = text;
  parent.appendChild(el);
  return el;
}

function drawPlot(svg, c) {
  c.candles.forEach(([high, top, bottom, low, dir], i) => {
    const x = Math.floor(c.x0 + i * c.step);
    const fill = dir ? c.up : c.down;
    add(svg, 'rect', { x: x, y: high, width: c.wick, height: Math.max(1, low - high), fill });
    add(svg, 'rect', { x: x - (c.body - 1) / 2, y: top, width: c.body, height: Math.max(1, bottom - top), fill });
  });

  const line = { fill: 'none', 'stroke-width': 2 };
  add(svg, 'polyline', { ...line, points: c.fast, stroke: '#008000', 'stroke-dasharray': '5 5' });
  add(svg, 'polyline', { ...line, points: c.slow, stroke: '#000' });
  add(svg, 'polyline', { ...line, points: c.medium, stroke: '#f00', 'stroke-dasharray': '5 5' });

  c.zones.forEach(z => {
    add(svg, 'rect', { x: z.x, y: z.y, width: z.w, height: z.h, fill: z.fill, stroke: z.color, 'stroke-width': 2, 'stroke-dasharray': '2 2' });
  });
  if (c.ellipse) {
    const e = c.ellipse;
    add(svg, 'circle', { r: e.r, transform: `translate(${e.cx} ${e.cy}) scale(1 ${e.ratio})`, fill: 'rgba(255,40,20,.1)', stroke: '#f00', 'stroke-width': 2, 'stroke-dasharray': '2 2' });
  }
  c.lines.forEach(([x1, y1, x2, y2, stroke]) => {
    add(svg, 'line', { x1, y1, x2, y2, stroke, 'stroke-width': 2 });
  });

  const right = c.box[0] + c.box[2];
  add(svg, 'line', { x1: c.box[0], y1: c.last, x2: right, y2: c.last, stroke: '#ee1c10' });
  add(svg, 'line', { x1: c.prevFrom, y1: c.prev, x2: right, y2: c.prev, stroke: '#e00000', 'stroke-dasharray': '2 2' });

  const m = c.marker;
  add(svg, 'path', { d: `M${m} 128.500L${m + 6} 134V140.500H${m - 6}V134Z`, fill: '#b4b4b4', stroke: '#444' });
}

function drawTimeAxis(svg, c, width) {
  const pos = x => (x - c.box[0]) / width * 100 + '%';
  c.times.forEach(([text, x]) => {
    add(svg, 'text', { x: pos(x), y: 13, 'text-anchor': 'middle' }, text);
  });
  if (c.cursor) {
    const g = add(svg, 'svg', { x: pos(c.cursor[1]), y: 0, overflow: 'visible' });
    add(g, 'rect', { x: -62, y: 0, width: 123, height: 16 });
    add(g, 'text', { x: 0, y: 13, 'text-anchor': 'middle', fill: '#fff' }, c.cursor[0]);
  }
}

function drawPriceAxis(svg, c) {
  const pos = y => (y - c.box[1]) / c.box[3] * 100 + '%';
  c.prices.forEach(([text, y, cls]) => {
    add(svg, 'text', { x: 7, y: pos(y), dy: 5, class: cls || '' }, text);
  });
  c.tags.forEach(t => {
    const g = add(svg, 'svg', { x: 0, y: pos(t.y), overflow: 'visible' });
    add(g, 'rect', { x: -1, y: -t.h / 2, width: 86, height: t.h, rx: t.r, fill: t.fill });
    add(g, 'text', { x: t.x, y: 5, class: t.cls || '', fill: t.color || 'none' }, t.text);
  });
}

function drawChart(id, c, width) {
  const panel = document.getElementById(id);
  drawPlot(panel.querySelector('.plot svg'), c);
  drawTimeAxis(panel.querySelector('.time-axis'), c, width);
  drawPriceAxis(panel.querySelector('.price-axis'), c);
  panel.querySelector('.delta').style.top = (c.prev - c.box[1] - 7) / c.box[3] * 100 + '%';
}

drawChart('intraday', intraday, 955);
drawChart('daily', daily, 953);
```
